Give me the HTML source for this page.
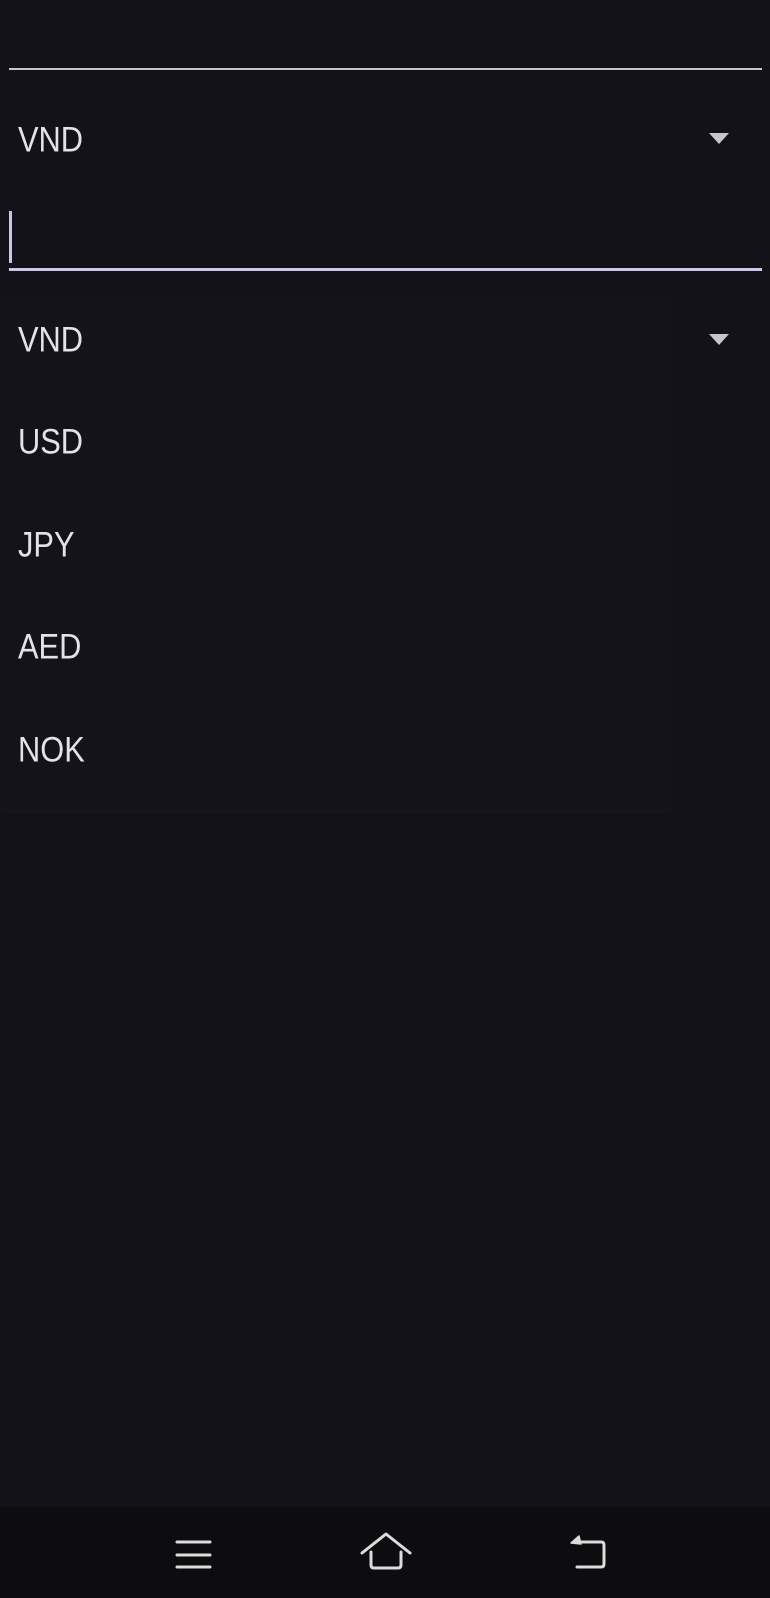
<!DOCTYPE html>
<html><head><meta charset="utf-8"><style>
html,body{margin:0;padding:0;width:770px;height:1598px;background:#141219;overflow:hidden;font-family:"Liberation Sans",sans-serif;color:#e6e1e9}
.abs{position:absolute}
.t{position:absolute;left:18px;font-size:35px;line-height:1;transform-origin:0 50%;transform:translateY(-50%) scaleX(0.88)}
.arr{position:absolute;left:709px;width:0;height:0;border-left:10px solid transparent;border-right:10px solid transparent;border-top:11px solid #c9c5d0}
</style></head><body>
<div class="abs" style="left:9px;top:68px;width:753px;height:2px;background:#c9c5d0"></div>
<div class="t" style="top:140px">VND</div>
<div class="arr" style="top:133px"></div>
<div class="abs" style="left:9px;top:211px;width:3px;height:52px;background:#cfc3e6"></div>
<div class="abs" style="left:9px;top:268px;width:753px;height:3px;background:#d0c8e0"></div>
<div class="abs" style="left:0;top:296px;width:672px;height:518px;background:#15131a;box-shadow:0 3px 10px rgba(0,0,0,0.12);border-radius:0 0 4px 4px"></div>
<div class="t" style="top:340px">VND</div>
<div class="arr" style="top:334px"></div>
<div class="t" style="top:442px">USD</div>
<div class="t" style="top:545px">JPY</div>
<div class="t" style="top:647px">AED</div>
<div class="t" style="top:750px">NOK</div>
<div class="abs" style="left:0;top:1507px;width:770px;height:91px;background:#0d0d10"></div>
<svg class="abs" style="left:0;top:1507px" width="770" height="91" viewBox="0 0 770 91" fill="none" stroke="#dcdcdc" stroke-width="3" stroke-linecap="round" stroke-linejoin="round">
<g transform="translate(0,-8)">
<path d="M177 43H210M177 56H210M177 68H210"/>
<path d="M362 54L386 35L410 54M371 53V66Q371 69 374 69H398Q401 69 401 66V53"/>
<path d="M576 43H601Q604 43 604 46V65Q604 68 601 68H577"/>
<path d="M579 37L571 44L581 45Z" fill="#dcdcdc" stroke-width="1.5"/>
</g>
</svg>
</body></html>
